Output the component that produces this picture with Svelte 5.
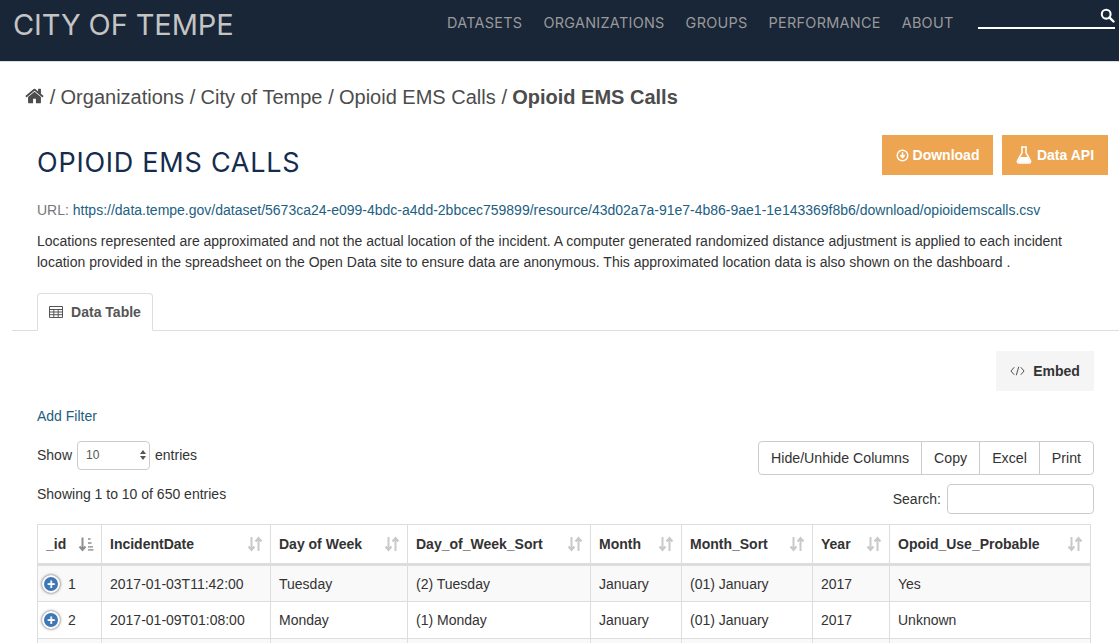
<script>
	const nav = ['DATASETS', 'ORGANIZATIONS', 'GROUPS', 'PERFORMANCE', 'ABOUT'];
	const crumbs = ['Organizations', 'City of Tempe', 'Opioid EMS Calls'];
	const columns = ['_id', 'IncidentDate', 'Day of Week', 'Day_of_Week_Sort', 'Month', 'Month_Sort', 'Year', 'Opoid_Use_Probable'];
	const rows = [
		['1', '2017-01-03T11:42:00', 'Tuesday', '(2) Tuesday', 'January', '(01) January', '2017', 'Yes'],
		['2', '2017-01-09T01:08:00', 'Monday', '(1) Monday', 'January', '(01) January', '2017', 'Unknown'],
		['', '', '', '', '', '', '', '']
	];
</script>

<header class="topbar">
	<div class="brand">CITY OF TEMPE</div>
	<nav class="mainnav">
		{#each nav as item}
			<span>{item}</span>
		{/each}
	</nav>
	<div class="sitesearch">
		<svg viewBox="0 0 16 16" width="15" height="15" aria-hidden="true">
			<circle cx="6.6" cy="6.6" r="4.7" fill="none" stroke="#fff" stroke-width="2.2" />
			<path d="M10.2 10.2 14.4 14.4" stroke="#fff" stroke-width="2.6" stroke-linecap="round" />
		</svg>
	</div>
</header>

<main class="page">
	<div class="breadcrumb">
		<svg class="home" viewBox="0 0 1664 1792" width="19" height="20" aria-hidden="true">
			<path fill="#4c4c4c" d="M1408 992v480q0 26-19 45t-45 19h-384v-384h-256v384h-384q-26 0-45-19t-19-45v-480q0-1 .5-3t.5-3l575-474 575 474q1 2 1 6zm223-69l-62 74q-8 9-21 11h-3q-13 0-21-7l-692-577-692 577q-12 8-24 7-13-2-21-11l-62-74q-8-10-7-23.5t11-21.5l719-599q32-26 76-26t76 26l244 204v-195q0-14 9-23t23-9h192q14 0 23 9t9 23v408l219 182q10 8 11 21.5t-7 23.5z" />
		</svg>
		{#each crumbs as crumb}
			<span class="sep">/</span><span>{crumb}</span>
		{/each}
		<span class="sep">/</span><strong>Opioid EMS Calls</strong>
	</div>

	<div class="titlerow">
		<h1>OPIOID EMS CALLS</h1>
		<div class="actions">
			<button class="orange dl">
				<svg viewBox="0 0 14 14" width="13" height="13" aria-hidden="true">
					<circle cx="7" cy="7" r="5.7" fill="none" stroke="#fff" stroke-width="1.5" />
					<path d="M7 3.6v5M4.6 6.6 7 9.2l2.4-2.6" fill="none" stroke="#fff" stroke-width="1.6" />
				</svg>
				Download
			</button>
			<button class="orange api">
				<svg viewBox="0 0 16 18" width="16" height="18" aria-hidden="true">
					<path d="M5 1h6M6 1.5v5.2L1.6 14.6c-.6 1.1 0 2.4 1.3 2.4h10.2c1.3 0 1.9-1.3 1.3-2.4L10 6.7V1.5" fill="none" stroke="#fff" stroke-width="1.5" />
					<path d="M4.4 11h7.2l2.4 4.6q.2 1-.9 1H2.9q-1.1 0-.9-1z" fill="#fff" />
				</svg>
				Data API
			</button>
		</div>
	</div>

	<p class="url">URL: <a href="#top">https://data.tempe.gov/dataset/5673ca24-e099-4bdc-a4dd-2bbcec759899/resource/43d02a7a-91e7-4b86-9ae1-1e143369f8b6/download/opioidemscalls.csv</a></p>
	<p class="desc">Locations represented are approximated and not the actual location of the incident. A computer generated randomized distance adjustment is applied to each incident location provided in the spreadsheet on the Open Data site to ensure data are anonymous. This approximated location data is also shown on the dashboard .</p>

	<div class="tabs">
		<div class="tab">
			<svg viewBox="0 0 14 12" width="14" height="12" aria-hidden="true">
				<path d="M.5.5h13v11H.5zM.5 3.5h13M.5 6h13M.5 8.7h13M4.8 3.5v8M9.2 3.5v8" fill="none" stroke="#555" stroke-width="1" />
			</svg>
			Data Table
		</div>
	</div>

	<div class="embedrow">
		<button class="embed">
			<svg viewBox="0 0 16 10" width="15" height="10" aria-hidden="true">
				<path d="M4.5 1 1 5l3.5 4M11.5 1 15 5l-3.5 4M9.3.5 6.7 9.5" fill="none" stroke="#444" stroke-width="1" />
			</svg>
			Embed
		</button>
	</div>

	<a class="addfilter" href="#top">Add Filter</a>

	<div class="controls">
		<div class="leftctl">
			<div class="length">
				Show
				<span class="select">10
					<svg viewBox="0 0 6 10" width="6" height="10" aria-hidden="true">
						<path d="M3 0 6 4H0zM3 10 0 6h6z" fill="#555" />
					</svg>
				</span>
				entries
			</div>
			<div class="info">Showing 1 to 10 of 650 entries</div>
		</div>
		<div class="rightctl">
			<div class="btngroup">
				<span>Hide/Unhide Columns</span><span>Copy</span><span>Excel</span><span>Print</span>
			</div>
			<div class="search">Search: <span class="searchbox"></span></div>
		</div>
	</div>

	<table>
		<thead>
			<tr>
				{#each columns as col, i}
					<th>
						<div class="thcell">
							{col}
							<svg viewBox="0 0 16 16" width="16" height="16" aria-hidden="true">
								{#if i === 0}
									<path d="M4.5 1.5v12M1.5 10.5l3 3.5 3-3.5" fill="none" stroke="#8f8f8f" stroke-width="2" />
									<path d="M10 2h2.5v2H10zM10 6h3.5v2H10zM10 10h5v1.8h-5zM10 13h5.5v1.8H10z" fill="#a8a8a8" />
								{:else}
									<path d="M4.5 1v13M1.5 10.5l3 3.500 3-3.500M11.500 15V2M8.500 5.500l3-3.500 3 3.500" fill="none" stroke="#c9c9c9" stroke-width="2" />
								{/if}
							</svg>
						</div>
					</th>
				{/each}
			</tr>
		</thead>
		<tbody>
			{#each rows as row}
				<tr>
					{#each row as cell, i}
						<td>
							{#if i === 0 && cell}
								<div class="idcell"><span class="expand">+</span>{cell}</div>
							{:else}
								{cell}
							{/if}
						</td>
					{/each}
				</tr>
			{/each}
		</tbody>
	</table>
</main>

<style>
	:global(html), :global(body) {
		margin: 0;
		height: 643px;
		overflow: hidden;
		background: #fff;
	}

	.topbar {
		height: 61px;
		background: #192638;
		border-bottom: 1px solid #d9dde2;
		display: flex;
		font-family: "Inter", "Liberation Sans", sans-serif;
	}
	.brand {
		margin: 5px 0 0 13px;
		font-size: 29px;
		line-height: 40px;
		letter-spacing: -0.1px;
		color: #c4c4c4;
		width: 434px;
		flex: none;
		white-space: nowrap;
	}
	.mainnav {
		display: flex;
		gap: 21px;
		height: 44px;
		align-items: center;
		font-size: 14.4px;
		letter-spacing: 0.3px;
		color: #9a9a9a;
		white-space: nowrap;
	}
	.sitesearch {
		margin: 0 4px 0 24px;
		flex: 1;
		height: 19px;
		border-bottom: 2px solid #fff;
		display: flex;
		justify-content: flex-end;
		padding-top: 8px;
	}

	.page {
		height: 581px;
		overflow: hidden;
		padding: 0 11px 0 12px;
		font-family: "Liberation Sans", Arial, sans-serif;
		color: #333;
		font-size: 14px;
	}
	.breadcrumb {
		display: flex;
		align-items: center;
		height: 24px;
		margin: 23px 0 0 13px;
		font-size: 20px;
		color: #4c4c4c;
		white-space: nowrap;
	}
	.sep {
		margin: 0 5.2px 0 5.8px;
	}
	.home {
		margin-top: -2px;
	}
	strong {
		font-weight: 700;
	}

	.titlerow {
		display: flex;
		justify-content: space-between;
		margin: 26px 0 0 25px;
		height: 58px;
	}
	h1 {
		margin: 10px 0 0;
		font-family: "Inter", "Liberation Sans", sans-serif;
		font-weight: 400;
		font-size: 27px;
		line-height: 36px;
		letter-spacing: 0.75px;
		color: #152c4e;
		white-space: nowrap;
	}
	.actions {
		display: flex;
		gap: 9px;
		height: 40px;
	}
	button {
		font-family: inherit;
		border: 0;
		display: flex;
		align-items: center;
		justify-content: center;
		padding: 0;
		cursor: pointer;
	}
	.orange {
		background: #eea551;
		color: #fff;
		font-size: 14px;
		font-weight: 700;
		height: 40px;
		gap: 4px;
	}
	.dl {
		width: 111px;
	}
	.api {
		width: 106px;
		gap: 5px;
	}

	.url {
		margin: 7px 0 0 25px;
		line-height: 20px;
		color: #777;
		white-space: nowrap;
	}
	a {
		color: #22607f;
		text-decoration: none;
	}
	.desc {
		margin: 11px 0 0 25px;
		line-height: 21px;
		width: 1040px;
	}

	.tabs {
		margin: 20px -11px 0 0;
		padding-left: 25px;
		height: 37px;
		border-bottom: 1px solid #ddd;
		display: flex;
	}
	.tab {
		width: 116px;
		height: 38px;
		box-sizing: border-box;
		border: 1px solid #ddd;
		border-bottom-color: #fff;
		border-radius: 4px 4px 0 0;
		background: #fff;
		display: flex;
		align-items: center;
		justify-content: center;
		gap: 8px;
		font-size: 14px;
		font-weight: 700;
		color: #555;
	}

	.embedrow {
		display: flex;
		justify-content: flex-end;
		margin: 20px 14px 0 0;
	}
	.embed {
		width: 98px;
		height: 40px;
		background: #f5f5f5;
		color: #333;
		font-size: 14px;
		font-weight: 700;
		gap: 8px;
	}

	.addfilter {
		display: block;
		margin: 15px 0 0 25px;
		line-height: 20px;
	}

	.controls {
		display: flex;
		justify-content: space-between;
		margin: 14px 14px 0 25px;
		height: 84px;
	}
	.length {
		display: flex;
		align-items: center;
		gap: 5px;
		height: 30px;
	}
	.select {
		width: 73px;
		height: 29px;
		box-sizing: border-box;
		border: 1px solid #ccc;
		border-radius: 4px;
		display: flex;
		align-items: center;
		justify-content: space-between;
		padding: 0 3px 0 8px;
		font-size: 12px;
		color: #555;
	}
	.info {
		margin-top: 14px;
		line-height: 20px;
	}
	.rightctl {
		display: flex;
		flex-direction: column;
		align-items: flex-end;
		margin-top: 1px;
	}
	.btngroup {
		display: flex;
		height: 34px;
		box-sizing: border-box;
		border: 1px solid #ccc;
		border-radius: 4px;
		font-size: 14.2px;
	}
	.btngroup span {
		display: flex;
		align-items: center;
		padding: 0 12px;
		border-left: 1px solid #ccc;
	}
	.btngroup span:first-child {
		border-left: 0;
	}
	.search {
		display: flex;
		align-items: center;
		gap: 6px;
		margin-top: 9px;
	}
	.searchbox {
		display: block;
		width: 147px;
		height: 30px;
		box-sizing: border-box;
		border: 1px solid #ccc;
		border-radius: 4px;
	}

	table {
		margin: 0 0 0 25px;
		width: 1054px;
		table-layout: fixed;
		border-collapse: collapse;
	}
	th, td {
		border: 1px solid #ddd;
		padding: 0 8px;
		text-align: left;
		white-space: nowrap;
		box-sizing: border-box;
	}
	th {
		height: 40px;
		border-bottom: 3px solid #ddd;
		font-weight: 700;
		padding-right: 7px;
	}
	td {
		height: 37px;
		color: #333;
	}
	tbody tr:nth-child(odd) {
		background: #f9f9f9;
	}
	th:nth-child(1) { width: 64px; }
	th:nth-child(2) { width: 169px; }
	th:nth-child(3) { width: 137px; }
	th:nth-child(4) { width: 183px; }
	th:nth-child(5) { width: 91px; }
	th:nth-child(6) { width: 131px; }
	th:nth-child(7) { width: 77px; }
	.thcell {
		display: flex;
		justify-content: space-between;
		align-items: center;
	}
	.idcell {
		display: flex;
		align-items: center;
		gap: 8px;
		margin-left: -4px;
	}
	.expand {
		width: 14px;
		height: 14px;
		border-radius: 50%;
		background: #3f76b5;
		border: 2px solid #fff;
		box-shadow: 0 0 3px #444;
		color: #fff;
		font-weight: 700;
		font-size: 14px;
		line-height: 14px;
		text-align: center;
		flex: none;
	}
</style>
